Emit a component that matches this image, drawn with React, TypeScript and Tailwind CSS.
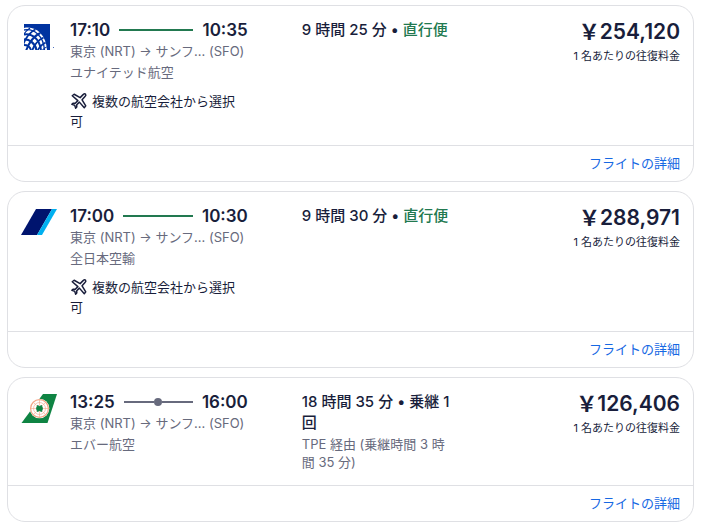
import React from 'react';

interface Flight {
  id: string;
  logo: React.ReactNode;
  depart: string;
  arrive: string;
  airline: string;
  duration: string;
  nonstop: boolean;
  layover?: string;
  multiAirline: boolean;
  price: string;
}

const UnitedLogo = () => (
  <svg viewBox="0 0 36 36" className="h-9 w-9" role="img" aria-label="ユナイテッド航空">
    <defs>
      <clipPath id="united-globe">
        <path d="M3 9C14 6.500 25 15 26 31H3z" />
      </clipPath>
    </defs>
    <rect x="3" y="5" width="26" height="26" fill="#0033a0" />
    <g clipPath="url(#united-globe)" fill="none" stroke="#0033a0">
      <rect x="3" y="5" width="26" height="26" fill="#fff" stroke="none" />
      <path d="M3 11C13 9 22.500 17 23.500 31" strokeWidth="1.3" />
      <path d="M3 15.500C11 14 18.500 20 20 31" strokeWidth="2" />
      <path d="M3 20.500C8 20 14 24 15.500 31" strokeWidth="2.200" />
      <path d="M3 26C6 26 9 28 10 31" strokeWidth="2" />
      <path d="M2 17C4 13 6 11 9 9" strokeWidth="1.200" />
      <path d="M2 26C5 18 9 13 15 10" strokeWidth="1.700" />
      <path d="M5 32C8 23 13 17 20 13.500" strokeWidth="2" />
      <path d="M11 32C13 26 17 21 23.500 18" strokeWidth="1.900" />
      <path d="M16.500 32C18 28 21 25 26 23" strokeWidth="1.700" />
      <path d="M21 32C22 30 24 28.500 27 27.500" strokeWidth="1.200" />
    </g>
    <rect x="32" y="28" width="1" height="1" fill="#4d70bd" />
  </svg>
);

const AnaLogo = () => (
  <svg viewBox="0 0 36 36" className="h-9 w-9" role="img" aria-label="全日本空輸">
    <path d="M15 4h16L16 30H0z" fill="#00146e" />
    <path d="M31 4h5L21 30h-5z" fill="#00b0f0" />
  </svg>
);

const EvaLogo = () => (
  <svg viewBox="0 0 36 36" className="h-9 w-9" role="img" aria-label="エバー航空">
    <path d="M22 3h14L26.500 32H0.500z" fill="#0f8443" />
    <circle cx="18.500" cy="17.500" r="9.800" fill="#fff" />
    <g fill="none" stroke="#f3a687" strokeWidth="0.6">
      <circle cx="18.500" cy="17.500" r="8.900" strokeWidth="1.200" />
      <circle cx="18.500" cy="17.500" r="6" />
      <path d="M18.500 9v17M10 17.500h17M12.500 11.500l12 12M24.500 11.500l-12 12" />
    </g>
    <path d="M16.500 14.500l2 1 2-1 1 3-1 3-2-1-2 1-1-3z" fill="#0f8443" stroke="#0f8443" />
  </svg>
);

const PlaneIcon = () => (
  <svg
    viewBox="0 0 24 24"
    className="mr-1 inline h-[18px] w-[18px] align-[-4px]"
    fill="none"
    stroke="currentColor"
    strokeWidth="2"
    strokeLinejoin="round"
    aria-hidden="true"
  >
    <path d="M3 5l2.500-2 8 4.500 4-4c1.200-1.100 2.500-1.200 3.200-.7.600.8.400 2.200-.7 3.300l-3.900 4.300L21 18.500 19 21l-6.500-7.500L9 17v3l-1.500 1.500-1.200-3.800-3.800-1.200L4 15h3l3.500-3.500z" />
  </svg>
);

const flights: Flight[] = [
  {
    id: 'ua',
    logo: <UnitedLogo />,
    depart: '17:10',
    arrive: '10:35',
    airline: 'ユナイテッド航空',
    duration: '9 時間 25 分',
    nonstop: true,
    multiAirline: true,
    price: '254,120',
  },
  {
    id: 'nh',
    logo: <AnaLogo />,
    depart: '17:00',
    arrive: '10:30',
    airline: '全日本空輸',
    duration: '9 時間 30 分',
    nonstop: true,
    multiAirline: true,
    price: '288,971',
  },
  {
    id: 'br',
    logo: <EvaLogo />,
    depart: '13:25',
    arrive: '16:00',
    airline: 'エバー航空',
    duration: '18 時間 35 分',
    nonstop: false,
    layover: 'TPE 経由 (乗継時間 3 時間 35 分)',
    multiAirline: false,
    price: '126,406',
  },
];

const FlightLine = ({ nonstop }: { nonstop: boolean }) => {
  if (nonstop) {
    return <span className="h-0.5 flex-1 bg-[#227950]" />;
  }
  return (
    <span className="flex flex-1 items-center">
      <span className="h-0.5 flex-1 bg-[#676a7d]" />
      <span className="h-2 w-2 rounded-full bg-[#676a7d]" />
      <span className="h-0.5 flex-1 bg-[#676a7d]" />
    </span>
  );
};

const FlightCard = ({ flight }: { flight: Flight }) => (
  <li className="rounded-[18px] border border-[#dfe0e4] bg-white">
    <div className="flex gap-[13px] px-[13px] pt-[13px] pb-[14px]">
      <div className="w-9 shrink-0">{flight.logo}</div>
      <div className="grid flex-1 grid-cols-[38%_38%_24%]">
        <div className="pr-[54px]">
          <h3 className="flex items-center gap-[9px] text-[17px] leading-[22px] font-semibold">
            <span>{flight.depart}</span>
            <FlightLine nonstop={flight.nonstop} />
            <span>{flight.arrive}</span>
          </h3>
          <p className="text-[13px] leading-[21px] whitespace-nowrap text-[#676a7d]">東京 (NRT) → サンフ... (SFO)</p>
          <p className="text-[13px] leading-[21px] text-[#676a7d]">{flight.airline}</p>
          {flight.multiAirline && (
            <p className="mt-2 pr-2 text-[13px] leading-5">
              <PlaneIcon />
              複数の航空会社から選択可
            </p>
          )}
        </div>

        <div className="pr-20">
          <p className="text-[15px] leading-[21px] font-medium">
            {flight.duration} • {flight.nonstop ? <span className="text-[#227950]">直行便</span> : '乗継 1 回'}
          </p>
          {flight.layover && (
            <p className="mt-0.5 text-[13px] leading-[18px] text-[#676a7d]">{flight.layover}</p>
          )}
        </div>

        <div className="text-right whitespace-nowrap">
          <p className="text-[21px] leading-[26px] font-semibold">￥{flight.price}</p>
          <p className="mt-0.5 text-[11px] leading-[18px]">1 名あたりの往復料金</p>
        </div>
      </div>
    </div>
    <div className="flex justify-end border-t border-[#dfe0e4] px-[13px] py-2">
      <a href="#details" className="text-[13px] leading-[19px] text-[#1668e3]">フライトの詳細</a>
    </div>
  </li>
);

export default function App() {
  return (
    <main lang="ja" className="bg-white pt-[5px] pr-2 pl-[7px] font-['Inter','Noto_Sans_CJK_JP',sans-serif] text-[#191e3b]">
      <ul className="flex flex-col gap-[9px]">
        {flights.map((flight) => (
          <FlightCard key={flight.id} flight={flight} />
        ))}
      </ul>
    </main>
  );
}
